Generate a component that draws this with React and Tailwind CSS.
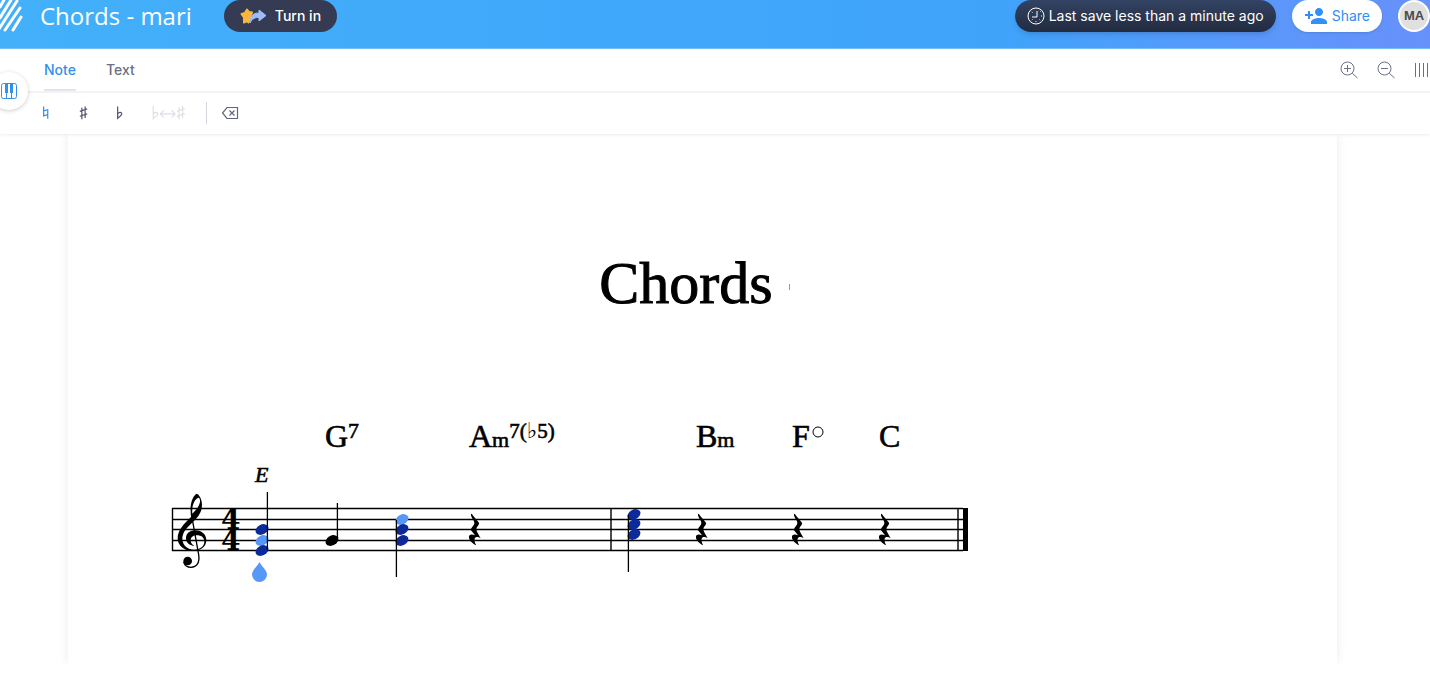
// App.jsx
// Notation editor: title bar, note toolbar and the score sheet

import { MdPersonAdd } from 'react-icons/md'

const STAFF_LINES = [508, 519, 529, 540, 550]

const NOTES = [
  { x: 262, stemX: 267, from: 492, to: 550, heads: [[529, '#0d2a9b'], [540, '#5797f8'], [550, '#0d2a9b']] },
  { x: 332, stemX: 337, from: 503, to: 540, heads: [[540, '#000000']] },
  { x: 402, stemX: 396, from: 520, to: 577, heads: [[519, '#5797f8'], [529, '#0d2a9b'], [540, '#0d2a9b']] },
  { x: 634, stemX: 628, from: 515, to: 572, heads: [[514, '#0d2a9b'], [524, '#0d2a9b'], [534, '#0d2a9b']] },
]

const RESTS = [469, 696, 792, 879]

const NATURAL = 'M1 0V11.5L6 10M6 15V4L1 5.500'
const SHARP = 'M2.500 1.500V15.500M6.500 0V14M0 6L9 3M0 12L9 9'
const FLAT = 'M1 0V14.500C4 12 6.500 10.500 6 8.500C5.500 6.500 2.500 7 1 9'

function Logo() {
  return (
    <svg width="24" height="32" viewBox="0 0 24 32" stroke="white" strokeWidth="3" strokeLinecap="round" aria-hidden="true">
      <path d="M0 7L4 0M0 18L11 0M-1 29L17 1M5 30L20 8M13 30L21 17" />
    </svg>
  )
}

function TurnInIcon() {
  return (
    <svg width="27" height="18" viewBox="0 0 27 18" aria-hidden="true">
      <path d="M7 2.500L9 5L12 5.500L10.500 9L8.500 15.500L7 14L4 15.500L4 10.500L1.500 7L5 6Z" fill="#fbb63e" stroke="#fbb63e" strokeWidth="2" strokeLinejoin="round" />
      <path d="M10 16C10 9 13 6 19 6V3L26 8.500L19 14V10.500C15 10 12 12 10 16Z" fill="#9dbcf9" stroke="#9dbcf9" strokeLinejoin="round" />
    </svg>
  )
}

function ClockIcon() {
  return (
    <svg width="18" height="18" viewBox="0 0 18 18" fill="none" stroke="white" aria-hidden="true">
      <circle cx="9" cy="9" r="8" />
      <path d="M10 4V10H5" />
      <path d="M9 14v1M14 9h1M12.500 12.500l.7.7M5.500 12.500l-.7.7M5.500 5.500l-.7-.7M13 5l.5-.5" />
    </svg>
  )
}

function PianoIcon() {
  return (
    <svg width="18" height="18" viewBox="0 0 18 18" fill="none" stroke="#3390ec" aria-hidden="true">
      <rect x="1.500" y="1.500" width="15" height="15" rx="2" />
      <path d="M6.500 11V16M11.500 11V16" />
      <path d="M5 1h3v10H5zM10 1h3v10h-3z" fill="#3390ec" stroke="none" />
    </svg>
  )
}

function ZoomIcon({ plus }) {
  return (
    <svg width="18" height="18" viewBox="0 0 18 18" fill="none" stroke="#6b6e85" aria-hidden="true">
      <circle cx="7.500" cy="7.500" r="6.500" />
      <path d="M12.300 12.300L17.500 17M4 7.500H11" />
      {plus && <path d="M7.500 4V11" />}
    </svg>
  )
}

function Accidental({ d, color }) {
  return (
    <svg width="9" height="16" viewBox="-1 0 11 16" fill="none" stroke={color} strokeWidth="1.500" aria-hidden="true">
      <path d={d} />
    </svg>
  )
}

function EnharmonicIcon() {
  return (
    <svg width="36" height="14" viewBox="0 0 38 16" fill="none" stroke="#dddee6" aria-hidden="true">
      <path d={FLAT} strokeWidth="1.300" />
      <path d="M9 9H26M13 5L9 9L13 13M22 5L26 9L22 13" strokeWidth="1.300" />
      <path d={SHARP} transform="translate(28 0)" strokeWidth="1.300" />
    </svg>
  )
}

function BackspaceIcon() {
  return (
    <svg width="18" height="14" viewBox="0 0 18 14" fill="none" stroke="#62657d" strokeWidth="1.200" aria-hidden="true">
      <path d="M6 1.500H16.500V12.500H6L1.500 7Z" />
      <path d="M8.500 4.500L13.500 9.500M13.500 4.500L8.500 9.500" />
    </svg>
  )
}

function TrebleClef() {
  return (
    <g transform="translate(160 400) scale(0.3333)">
      <path
        fillRule="evenodd"
        d="M109 281C116 281 126 296 126 314C126 337 113 353 98 367C81 383 67 397 67 417C67 436 84 449 102 449C121 449 133 438 133 425C133 412 123 406 111 406C99 406 92 412 92 421C92 430 97 434 104 438C88 436 78 428 78 414C78 400 90 391 106 391C126 391 139 404 139 421C139 441 122 453 98 453C72 453 53 437 53 415C53 391 70 373 94 350C89 330 91 295 109 281ZM115 293C102 298 95 318 97 341C112 327 122 312 120 300C119 295 117 293 115 293Z"
      />
      <path d="M94 342L116 464C120 490 109 502 93 502C82 502 74 496 71 486" fill="none" stroke="black" strokeWidth="4" />
      <circle cx="83" cy="483" r="13" />
    </g>
  )
}

function QuarterRest({ x }) {
  return (
    <path
      transform={`translate(${x - 9} 504) scale(0.3333)`}
      d="M33 29C36 29 38 33 40 36L57 56C59 60 54 64 51 69C48 74 49 80 53 87L62 103C55 98 46 98 44 104C42 110 45 116 48 123C43 123 28 110 27 101C26 91 34 90 45 94L33 79C31 73 42 66 43 58C44 48 31 40 33 29Z"
    />
  )
}

function Score() {
  return (
    <svg className="font-['Liberation_Serif',serif]" width="820" height="180" viewBox="160 410 820 180" role="img" aria-label="Score, two bars in 4/4">
      {/* Chord symbols */}
      <g fontSize="32" stroke="black" strokeWidth="0.600">
        <text x="325" y="447">G<tspan dy="-9" fontSize="22">7</tspan></text>
        <text x="469" y="447">
          A<tspan fontSize="22">m</tspan>
          <tspan dy="-9" fontSize="21">7(</tspan>
          <tspan fontSize="22" fontFamily="DejaVu Sans" strokeWidth="0">♭</tspan>
          <tspan fontSize="21">5)</tspan>
        </text>
        <text x="696" y="447">B<tspan fontSize="22">m</tspan></text>
        <text x="792" y="447">F</text>
        <text x="879" y="447">C</text>
        <text x="255" y="482" fontSize="22" fontStyle="italic">E</text>
      </g>
      <circle cx="818" cy="432" r="5" fill="none" stroke="black" />

      {/* Staff and bar lines */}
      <g stroke="black">
        {STAFF_LINES.map((y) => (
          <path key={y} d={`M172 ${y + 0.5}H963`} strokeWidth="1.400" />
        ))}
        <path d="M172.500 508V551M611 508V551M958 508V551" strokeWidth="1.400" />
        <path d="M965.500 508V551" strokeWidth="5" />
      </g>

      <TrebleClef />
      {RESTS.map((x) => (
        <QuarterRest key={x} x={x} />
      ))}
      <g fontFamily="DejaVu Serif" fontWeight="bold" fontSize="28">
        <text x="221" y="529">4</text>
        <text x="221" y="550">4</text>
      </g>

      {NOTES.map((n) => (
        <g key={n.x}>
          {n.heads.map(([y, fill]) => (
            <ellipse key={y} cx={n.x} cy={y + 0.5} rx="6.800" ry="4.900" fill={fill} transform={`rotate(-28 ${n.x} ${y + 0.5})`} />
          ))}
          <path d={`M${n.stemX}.400 ${n.from}V${n.to}`} stroke="black" strokeWidth="1.300" />
        </g>
      ))}

      {/* Cursor under the selected note */}
      <path d="M259.500 562C262 567 267 570 267 574.500A7.500 7.500 0 0 1 252 574.500C252 570 257 567 259.500 562Z" fill="#5797f8" />
    </svg>
  )
}

export default function App() {
  return (
    <div className="relative bg-white font-['Inter',sans-serif] text-sm overflow-hidden">
      <header className="flex items-start h-[49px] bg-linear-to-r from-[#43b0fa] via-[#3fa3fa] via-70% to-[#6790fb] border-b border-[#75bdfb]">
        <Logo />
        <h1 className="ml-4 font-['Open_Sans',sans-serif] text-2xl leading-8 text-white">Chords - mari</h1>
        <button className="ml-8 h-8 px-4 flex items-center gap-2 rounded-full bg-[#353b52] text-white font-medium">
          <TurnInIcon />
          Turn in
        </button>
        <div className="ml-auto flex gap-4">
          <div className="h-8 px-3 flex items-center gap-1 rounded-full bg-linear-to-b from-[#334363] to-[#222c40] text-white shadow-md">
            <ClockIcon />
            Last save less than a minute ago
          </div>
          <button className="h-8 px-3 flex items-center gap-1 rounded-full bg-white text-[#2f8ffb] shadow-sm">
            <MdPersonAdd size={24} />
            Share
          </button>
          <button className="w-8 h-8 rounded-full border-2 border-white bg-[#e0e0e0] font-['Liberation_Sans',sans-serif] text-[13px] font-bold text-[#4a4a4a]">
            MA
          </button>
        </div>
      </header>

      <nav className="flex h-11 pl-11 border-b-2 border-[#f5f5f7] font-medium">
        <button className="h-[42px] pt-0.5 border-b-2 border-[#e3e4ec] text-[#3390ec]">Note</button>
        <button className="ml-[30px] h-[42px] pt-0.5 border-b-2 border-transparent text-[#6b6e85]">Text</button>
        <div className="ml-auto flex items-center gap-[19px]">
          <button aria-label="Zoom in"><ZoomIcon plus /></button>
          <button aria-label="Zoom out"><ZoomIcon /></button>
          <button aria-label="Layout">
            <svg width="16" height="14" viewBox="0 0 16 14" stroke="#6b6e85" aria-hidden="true">
              <path d="M1.500 0V14M5.500 0V14M9.500 0V14M13.500 0V14" />
            </svg>
          </button>
        </div>
      </nav>

      <div className="relative z-10 flex items-center gap-px h-[41px] pl-7 pb-0.5 bg-white shadow-[0_1px_3px_rgba(0,0,0,0.08)]">
        <button className="w-9 h-8 flex items-center justify-center" aria-label="Natural"><Accidental d={NATURAL} color="#3390ec" /></button>
        <button className="w-9 h-8 flex items-center justify-center" aria-label="Sharp"><Accidental d={SHARP} color="#55586f" /></button>
        <button className="w-9 h-8 flex items-center justify-center" aria-label="Flat"><Accidental d={FLAT} color="#55586f" /></button>
        <button className="ml-1.5 w-12 h-8 flex items-center justify-center" aria-label="Enharmonic" disabled><EnharmonicIcon /></button>
        <div className="ml-3 w-px h-[22px] bg-[#d5d6df]" />
        <button className="ml-1 w-9 h-8 flex items-center justify-center" aria-label="Delete"><BackspaceIcon /></button>
      </div>

      {/* Floating piano toggle, half off the left edge */}
      <button className="absolute z-20 top-[72px] -left-2.5 w-[38px] h-[38px] flex items-center justify-center rounded-full bg-white shadow-[0_1px_4px_rgba(0,0,0,0.2)]" aria-label="Piano">
        <PianoIcon />
      </button>

      <main className="pl-[68px] pr-[93px] overflow-hidden">
        <article className="pt-[113px] pb-[74px] bg-white shadow-[0_0_10px_rgba(0,0,0,0.08)]">
          <div className="flex items-center justify-center">
            <h2 className="font-['Liberation_Serif',serif] text-[60px] leading-[72px] text-black [-webkit-text-stroke:1px_black]">Chords</h2>
            <span className="mx-4 mt-2 w-px h-1.5 bg-[#999999]" />
          </div>
          <div className="mt-[91px] pl-[92px]">
            <Score />
          </div>
        </article>
      </main>
    </div>
  )
}
